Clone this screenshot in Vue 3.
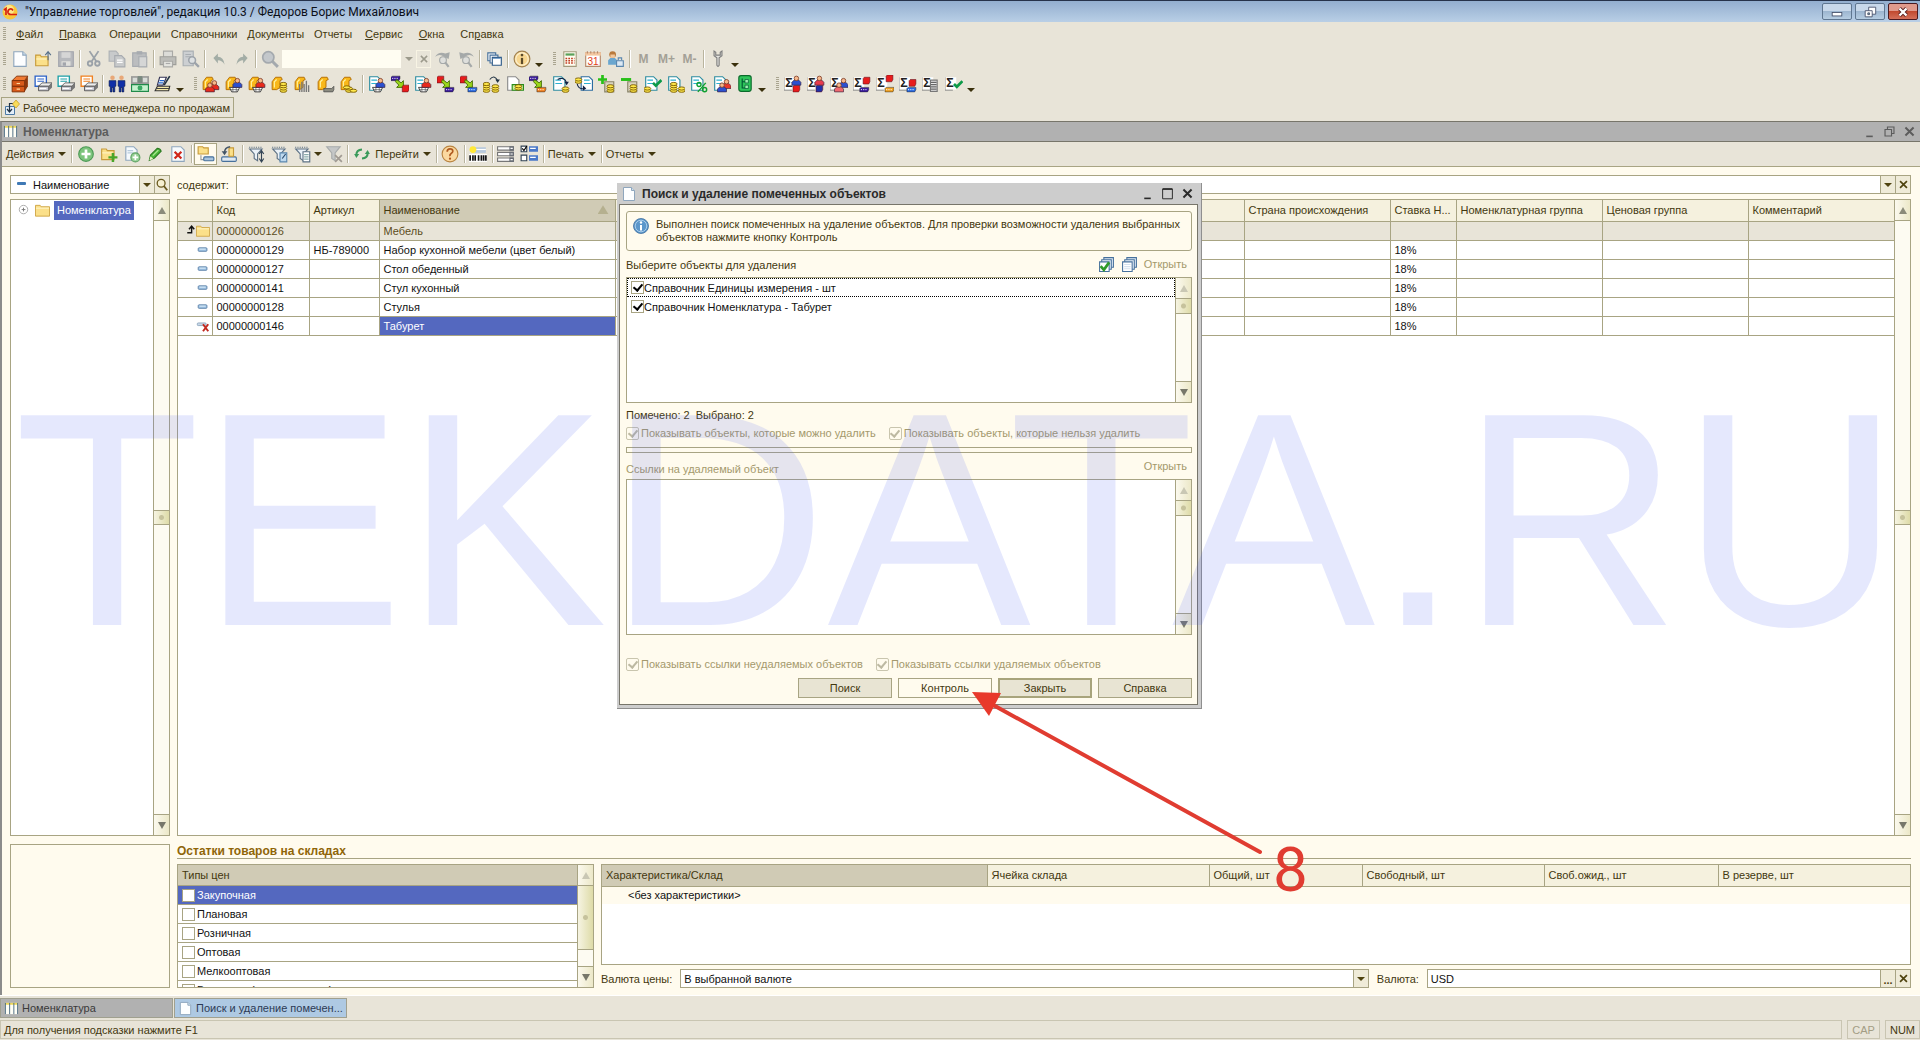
<script setup>
import { h, ref } from 'vue'

const doc = (c = '#2c8ca0', x = 1, y = 1, w = 10, hh = 12) =>
  `<path d="M${x}.5 ${y}.5h${w - 3}l3 3v${hh - 3}h-${w}z" fill="#fff" stroke="${c}"/>`
const lines = (c = '#2cb0d0', x = 3, y = 4) =>
  `<path d="M${x} ${y}.5h5M${x} ${y + 3}.5h6" stroke="${c}"/>`
const man = (x, y, c) =>
  `<path d="M${x} ${y + 8}v-2.500l2-2h4l2 2v2.500z" fill="${c}" stroke="#3a2540" stroke-width=".6"/><circle cx="${x + 4}" cy="${y + 2}" r="2" fill="#f6b98c" stroke="#7a3520" stroke-width=".7"/>`
const coins = (x, y, n = 3) =>
  Array.from({ length: n }, (_, i) => `<ellipse cx="${x + 3}" cy="${y + 6 - i * 2}" rx="3" ry="1.400" fill="#ffe84a" stroke="#7a5c00" stroke-width=".8"/>`).join('')
const bag = '<path d="M1 13V6l3-4h5l1 2-2 1v6l-3 2z" fill="#f9b81a" stroke="#b06a00" stroke-width=".8"/><path d="M3 11V6l2-2" stroke="#fff2a0" fill="none"/>'
const cart = (x, y) =>
  `<path d="M${x} ${y}h9l-2 4h-5z" fill="#fff" stroke="#333" stroke-width=".8"/><path d="M${x + 3} ${y}v4m3-4v4M${x + 1} ${y + 2}h7" stroke="#555" stroke-width=".6"/>`
const cube = (x, y, c) =>
  `<path d="M${x} ${y + 1}l1-1h5v4l-1 2h-5z" fill="${c}" stroke="#60101a" stroke-width=".5"/>`
const bar = (x, y, c) => `<path d="M${x} ${y + 1}l1-1h7v2l-1 2h-7z" fill="${c}" stroke="#222" stroke-width=".4"/><path d="M${x + 1} ${y + 2}h5" stroke="#fff" stroke-dasharray="1 1" stroke-width=".8"/>`
const go = '<path d="M5 4l4 3 2-2v6H5l2-2-3-3z" fill="#9ad61a" stroke="#3f6a00" stroke-width=".8"/>'
const sheet = '<path d="M0 2h10v11H0z" fill="#fff"/><path d="M0 13.500V2M0 13.500h7" stroke="#888" stroke-width=".8"/><text x="1" y="11" font-size="11" font-weight="bold" font-family="Liberation Sans" fill="#222">Σ</text>'
const printer = (c) =>
  `<path d="M1 1h10v9H1z" fill="#fff" stroke="${c}" stroke-width="1.200"/><path d="M3 3.500h6M3 5.500h6" stroke="${c}"/><path d="M4 10l3-3h9l-3 3z" fill="#eee" stroke="#444" stroke-width=".7"/><path d="M4 10h9v4H4z" fill="#c9c9d2" stroke="#444" stroke-width=".7"/><path d="M13 10l3-3v4l-3 3z" fill="#777"/><path d="M5 12h6" stroke="#fff"/>`
const check = (x, y) => `<path d="M${x} ${y + 3}l2.500 2.500 5-5" fill="none" stroke="#0c9a48" stroke-width="2.400"/>`
const curve = '<path d="M5 4q6-3 8 3" fill="none" stroke="#124"/><path d="M11 6h4l-2 3z" fill="#124"/>'
const funnel = '<path d="M1.500 3.500h11L8.500 8v6l-3-2V8z" fill="#eaf1f7" stroke="#5d7184"/><path d="M1 2h12" stroke="#5d7184" stroke-dasharray="1 1"/>'
const folder = (x, y) => `<path d="M${x}.5 ${y}.5h4l1 1.500h6v8h-11z" fill="#fbe08a" stroke="#c79a3a"/><path d="M${x + 1} ${y + 4}h9" stroke="#fff4c4"/>`
const pages = '<path d="M5.500 1.500h9v9h-9z" fill="#dfeaf5" stroke="#46709c"/><path d="M3.500 3.500h9v9h-9z" fill="#eef4fa" stroke="#46709c"/><path d="M1.500 5.500h9v9h-9z" fill="#fff" stroke="#46709c"/>'

const icons = {
  logo: '<circle cx="8" cy="8" r="7.500" fill="#f8c63a"/><circle cx="7" cy="6" r="5" fill="#fde78a"/><path d="M2 6l2-1.500V11M11 6.500q-1-2-3-1.500-2.500 1-2 3.500.5 2 3 2h6" fill="none" stroke="#d6220f" stroke-width="1.700"/>',
  blank: '<path d="M2.500 1.500h8l3 3v10h-11z" fill="#fdfeff" stroke="#8fa6bd"/><path d="M10.500 1.500v3h3" fill="#cfe0ee" stroke="#8fa6bd"/>',
  open: folder(1, 4) + '<path d="M12.500 9V2M10 4.500L12.500 1.500 15 4.500" fill="none" stroke="#56708a"/>',
  save: '<path d="M1.500 1.500h13v13h-13z" fill="#b7b9bd" stroke="#a2a5ac"/><path d="M4 2h8v5H4z" fill="#d6d6d6"/><path d="M4 10h8v4H4z" fill="#e0e0dd"/><path d="M5 11h3v3H5z" fill="#a2a5ac"/>',
  cut: '<path d="M4 1l6 9M12 1L6 10" stroke="#9aa1a8" stroke-width="1.600"/><circle cx="4.500" cy="12" r="2" fill="none" stroke="#9aa1a8" stroke-width="1.600"/><circle cx="11" cy="12" r="2" fill="none" stroke="#9aa1a8" stroke-width="1.600"/>',
  copy: '<path d="M1 1h6l2 2v7H1z" fill="#c8cacb" stroke="#adb1b5"/><path d="M6 5h6l3 3v7H6z" fill="#c8cacb" stroke="#a7abb0"/><path d="M8 9h5m-5 2h5" stroke="#fff"/>',
  paste: '<path d="M1.500 2.500h12v12h-12z" fill="#bbbdbf" stroke="#a7abb0"/><path d="M5 1h5v3H5z" fill="#a7abb0"/><path d="M7 6h7v9H7z" fill="#d5d6d6" stroke="#a7abb0"/>',
  print: '<path d="M4 1h8v6H4z" fill="#dcdcd8" stroke="#a9a9a6"/><path d="M1 6h14v7H1z" fill="#bcbcb8" stroke="#9e9e9a"/><path d="M4 10h8v5H4z" fill="#e4e4df" stroke="#a9a9a6"/><path d="M6 12h4" stroke="#aaa"/>',
  preview: '<path d="M1 1h9v13H1z" fill="#cccfd2" stroke="#a9aeb3"/><path d="M3 4h5M3 6h5" stroke="#a9aeb3"/><circle cx="9" cy="9" r="3" fill="#dde0e2" stroke="#9da3aa" stroke-width="1.400"/><path d="M11 11l4 4" stroke="#9da3aa" stroke-width="2"/>',
  undo: '<path d="M3 7l4-4v3q5 0 6 7-2-4-6-4v3z" fill="#a3ada6"/>',
  redo: '<path d="M13 7L9 3v3q-5 0-6 7 2-4 6-4v3z" fill="#a3ada6"/>',
  lens: '<circle cx="6.500" cy="6.500" r="5" fill="#c3c7cb" stroke="#a4a9ae" stroke-width="1.500"/><path d="M10 10l5 5" stroke="#a4a9ae" stroke-width="2.600"/>',
  next: '<path d="M1 6q3-5 9-3l4-1-1 6-4-2q-4-3-8 0z" fill="#a5a9a9"/><circle cx="8" cy="9" r="3" fill="#dedfdc" stroke="#a5a9a9"/><path d="M10 11l3 4" stroke="#a5a9a9" stroke-width="2"/>',
  prev: '<path d="M15 6q-3-5-9-3L2 2l1 6 4-2q4-3 8 0z" fill="#a5a9a9"/><circle cx="8" cy="9" r="3" fill="#dedfdc" stroke="#a5a9a9"/><path d="M10 11l3 4" stroke="#a5a9a9" stroke-width="2"/>',
  wins: '<path d="M2.500 2.500h7v7h-7z" fill="#fff" stroke="#46709c"/><path d="M4.500 4.500h7v7h-7z" fill="#fff" stroke="#46709c"/><path d="M6.500 6.500h8v7h-8z" fill="#fff" stroke="#2e5a88"/><path d="M7 7.500h7" stroke="#7ea4cc"/>',
  info: '<circle cx="8" cy="8" r="7" fill="#f7d690" stroke="#a08050"/><circle cx="8" cy="8" r="5.500" fill="none" stroke="#fdf0cf"/><circle cx="8" cy="4.500" r="1.200" fill="#5b4a2a"/><path d="M8 7v5.500" stroke="#5b4a2a" stroke-width="2"/>',
  calc: '<path d="M2.500 1.500h11v13h-11z" fill="#fffdf0" stroke="#a39a7c"/><path d="M4 3h8v2H4z" fill="#5aa05a"/><path d="M4 7.500h8M4 9.500h8M4 11.500h8" stroke="#c03a20" stroke-width="1.300" stroke-dasharray="1.500 1"/>',
  cal: '<path d="M1.500 2.500h13v12h-13z" fill="#fff" stroke="#b5896a"/><path d="M1 2h14v3H1z" fill="#f3c7a0"/><path d="M3 1v2m3-2v2m3-2v2m3-2v2" stroke="#b5896a"/><text x="3" y="13" font-size="9" font-family="Liberation Sans" fill="#e2401c">31</text>',
  user: '<circle cx="5" cy="4" r="3" fill="#b97a3c"/><path d="M3 4h4v3H3z" fill="#f2c79c"/><path d="M1 13V9l2-2h4l2 2v4z" fill="#6aa6cf"/><path d="M8.500 9.500h6v5h-6z" fill="#dce9f4" stroke="#5b87ae"/><path d="M10 9V7h3v2" fill="none" stroke="#5b87ae"/>',
  tools: '<path d="M4.500 1v4L7 7v6.500q1 2 2 0V7l2.500-2V1L10 2v2.500H6V2z" fill="#e4e4e0" stroke="#7d7d7d"/>',
  cabinet: '<path d="M1 5l4-4h10l-3 4z" fill="#f07a32" stroke="#7a2c06" stroke-width=".8"/><path d="M1 5h11v10H1z" fill="#d85a1a" stroke="#7a2c06" stroke-width=".8"/><path d="M12 5l3-4v9l-3 5z" fill="#8e360a"/><path d="M1 10h11" stroke="#7a2c06"/><path d="M5 7.500h3M5 12.500h3" stroke="#ffd9a0"/>',
  prBlue: printer('#2c62c8'),
  prTeal: printer('#1ca0a8'),
  prOrange: printer('#f08020'),
  people: '<circle cx="4" cy="2.500" r="2" fill="#e8a878"/><circle cx="12" cy="2.500" r="2" fill="#e8a878"/><path d="M1 5h6v5H6v5H4.500v-4h-1v4H2v-5H1zM9 5h6v5h-1v5h-1.500v-4h-1v4H10v-5H9z" fill="#0f2fa8" stroke="#061850" stroke-width=".6"/>',
  money: '<path d="M0 1h16v7H0z" fill="#9a9a98"/><path d="M1.500 2.500h4v4h-4zM10.500 2.500h4v4h-4z" fill="#d8dcd8"/><path d="M6 1h4v6H6z" fill="#7a8a80"/><path d="M.5 8.500h15v6H.5z" fill="#c6f2cf" stroke="#1f8a4a"/><circle cx="8" cy="11.500" r="2.200" fill="#3aa862"/>',
  scale: '<path d="M1 14l2-4h11l-1 4z" fill="#fff3b0" stroke="#333"/><path d="M5 2h6L8 9H3z" fill="#fff" stroke="#335"/><path d="M5 5h4M4 7h4" stroke="#26c" /><path d="M14 1L9 9" stroke="#234" stroke-width="1.500"/><path d="M2 12h12" stroke="#444"/>',
  bagRed: bag + man(7, 5, '#e82a1c') + man(3, 7, '#e82a1c'),
  bagCartBlue: bag + cart(4, 11) + man(7, 3, '#2c50d0'),
  bagCartRed: bag + cart(4, 11) + man(7, 3, '#e82a1c'),
  bagCoins: bag + coins(8, 8, 4),
  bagBars: bag + '<path d="M5 15V8m2 7V6m2 9V8m2 7V5m2 10V9" stroke="#777" stroke-width="1.200"/>',
  bagDash: bag + '<path d="M6 12h7l2-2v3l-1 2H6z" fill="#8b8b80" stroke="#444" stroke-width=".6"/>',
  bagPile: bag + coins(5, 8, 2) + coins(9, 8, 1) + coins(3, 5, 1),
  docCartBlue: doc() + lines() + cart(4, 11) + man(7, 3, '#2c50d0'),
  docCartRed: doc() + lines() + cart(4, 11) + man(7, 3, '#e82a1c'),
  moveOut: bar(0, 1, '#3a1a9c') + go + cube(10, 9, '#e81c1c'),
  moveIn: cube(0, 1, '#e81c1c') + go + bar(7, 11, '#3a1a9c'),
  moveIn2: cube(0, 1, '#e81c1c') + go + bar(7, 11, '#2a6ae0'),
  moveBars: bar(0, 1, '#3a1a9c') + go + bar(7, 11, '#f08020'),
  coinsTurn: coins(0, 8, 4) + coins(8, 8, 3) + '<path d="M6 4q4-5 7 1" fill="none" stroke="#234"/><path d="M11 4h4l-2 3z" fill="#234"/>',
  docMoney: doc('#8a8a8a') + '<path d="M5.500 8.500h10v5h-10z" fill="#c8f29a" stroke="#2a8a1a"/>' + coins(8, 6, 2),
  docTurn: doc() + lines() + curve + coins(9, 8, 2),
  turnDoc: doc('#2c6ca0', 5, 1) + lines('#2cb0d0', 8, 4) + coins(0, 0, 2) + '<path d="M2 8q1 5 6 4" fill="none" stroke="#124"/><path d="M7 9v5l3-2z" fill="#124"/>',
  plusCoins: '<path d="M6 6h8v9H6z" fill="#d9d4c0" stroke="#8a8468"/>' + coins(8, 8, 3) + '<path d="M4 0v8M0 4h8" stroke="#28c018" stroke-width="2.400"/>',
  minusCoins: '<path d="M6 6h8v9H6z" fill="#d9d4c0" stroke="#8a8468"/>' + coins(8, 8, 3) + '<path d="M0 4h9" stroke="#28c018" stroke-width="2.600"/>',
  docCheck: doc() + lines() + coins(0, 8, 2) + check(8, 4),
  docCoins: doc() + lines() + coins(3, 8, 4) + coins(10, 8, 2),
  docPct: doc() + lines() + '<circle cx="8" cy="8.500" r="1.800" fill="none" stroke="#10a030" stroke-width="1.300"/><circle cx="13" cy="13" r="1.800" fill="none" stroke="#10a030" stroke-width="1.300"/><path d="M14 7l-7 8" stroke="#10a030" stroke-width="1.300"/>',
  docMen: doc() + lines() + man(8, 4, '#e83a2c') + man(4, 7, '#2c50d0'),
  tree: '<rect x="2.500" y=".5" width="11" height="14" rx="2" fill="#2ec45a" stroke="#0a6a2a"/><path d="M5.500 3v8.500h3M5.500 6h3" stroke="#053" fill="none"/><path d="M8 4h3v3H8zM8 9h3v3H8z" fill="#9ff0b0" stroke="#053" stroke-width=".6"/>',
  sBlue: sheet + cube(8, 9, '#e81c1c') + man(7, 1, '#2c50d0'),
  sRed: sheet + cube(8, 9, '#2030a8') + man(7, 1, '#e83a4c'),
  sPink: sheet + man(8, 3, '#2c50d0') + man(4, 7, '#f06a70'),
  sCubePurple: sheet + cube(9, 2, '#e81c1c') + bar(6, 11, '#3a1a9c'),
  sCubeOrange: sheet + cube(9, 0, '#e81c1c') + bar(8, 11, '#f0a020'),
  sCubeBlue: sheet + cube(9, 4, '#e81c1c') + bar(7, 11, '#2a6ae0'),
  sList: sheet + '<path d="M7.500 4.500h6v10h-6z" fill="#e8e8e8" stroke="#777"/><path d="M8 6.500h5M8 8.500h5M8 10.500h5M8 12.500h5" stroke="#666"/>',
  sCheck: sheet + check(8, 5),
  work: '<path d="M1.500 6.500h9v8h-9z" fill="#e4eef8" stroke="#4d7aa5"/><path d="M5.500 3v8M3 9l2.500 3L8 9M5.500 3.500H9" fill="none" stroke="#234" stroke-width="1.200"/><path d="M12 0l3.500 4L12 8 8.500 4z" fill="#f9dc5a" stroke="#c49a20" stroke-width=".7"/>',
  grid: '<path d="M1 2h14v12H1z" fill="#fffef6"/><path d="M1 3h14" stroke="#eed75a" stroke-width="2"/><path d="M1.500 2v12M6 2v12M10.500 2v12M14.500 2v12" stroke="#4a6a80"/>',
  add: '<circle cx="8" cy="8" r="6.500" fill="#7cc47c" stroke="#4c9a55"/><path d="M8 4v8M4 8h8" stroke="#fff" stroke-width="2.400"/>',
  addFolder: folder(1, 3) + '<path d="M11.500 7v8M7.500 11h8" stroke="#49a52a" stroke-width="2.200"/>',
  addCopy: '<path d="M2.500 1.500h7l3 3v9h-10z" fill="#f4f9fd" stroke="#8fa6bd"/><path d="M4 5h5M4 7h5" stroke="#b7cbdc"/><circle cx="11" cy="11" r="4" fill="#93cf93" stroke="#5ba060"/><path d="M11 8.500v5M8.500 11h5" stroke="#fff" stroke-width="1.500"/>',
  edit: '<path d="M3 13.500l1-4.500 6-6q2.500 0 3.500 2.500l-6 6z" fill="#4cb83a" stroke="#2c7a22"/><path d="M3 13.500l1-3.500 2.500 2.500z" fill="#e8f4c8"/><path d="M6 9.500l5-5" stroke="#b4ec9a"/>',
  del: '<path d="M2.500 1.500h8l3 3v10h-11z" fill="#f6fafd" stroke="#8fa6bd"/><path d="M5 6l6 6M11 6l-6 6" stroke="#d0261a" stroke-width="2"/>',
  hier: '<path d="M1 1.500h4l1 1h4v5.500H1z" fill="#fbe08a" stroke="#c79a3a"/><path d="M3.500 9v4H6" fill="none" stroke="#999"/><rect x="6" y="10.500" width="9" height="3.500" rx="1" fill="#a9c4dc" stroke="#46709c"/>',
  up: '<rect x="1.500" y="10.500" width="13" height="4" rx="1" fill="#dfe9f2" stroke="#46709c"/><path d="M8 2.500h4V10H8z" fill="#fbe08a" stroke="#c79a3a"/><path d="M4 7q0-5 5-5.500" fill="none" stroke="#456" stroke-width="1.400"/><path d="M1.500 5.500h5L4 9z" fill="#456"/>',
  fSort: funnel + '<path d="M12 5v10M10 12l2 3 2-3M10 8l2-3 2 3" fill="none" stroke="#345"/>',
  fVal: funnel + '<path d="M8 7h6v8H8z" fill="#bfd9ee" stroke="#5a87ae"/><path d="M10 12l3-4" stroke="#246"/>',
  fHist: funnel + '<path d="M8 6h6v9H8z" fill="#fff" stroke="#5d7184"/><path d="M9 8.500h4M9 10.500h4M9 12.500h4" stroke="#8aa"/>',
  fOff: '<path d="M1.500 1.500h12L9 7v7l-3-2V7z" fill="#c5c7c7" stroke="#a7abab"/><path d="M9 9l6 6M15 9l-6 6" stroke="#a09a92" stroke-width="1.500"/>',
  refresh: '<path d="M3 8.500q0-4 5-4.500M13 7.500q0 4-5 4.500" fill="none" stroke="#3a9a5a" stroke-width="1.800"/><path d="M1 8h4.500L3 11.500zM10.500 8H15l-2-3.500z" fill="#3a9a5a"/>',
  help: '<circle cx="8" cy="8" r="7" fill="#fbd9a0" stroke="#b98440"/><path d="M5.500 6q0-2.500 2.500-2.500t2.500 2q0 1-1.500 2T8 10" fill="none" stroke="#b05a20" stroke-width="1.500"/><circle cx="8" cy="12.200" r="1" fill="#b05a20"/>',
  barcode: '<path d="M5 2h10v5H5z" fill="#b7c9dc"/><path d="M5 4h10" stroke="#fff"/><circle cx="3.500" cy="4" r="3" fill="#ffe836"/><path d="M0 8h16v7H0z" fill="#fff"/><path d="M1 9v5M3.500 9v5M5.500 9v5M8.500 9v5M11 9v5M13 9v5M15 9v5" stroke="#111" stroke-width="1.500"/>',
  rows: '<path d="M.5 1.500h14v3H.5zM.5 6.500h14v3H.5zM.5 11.500h14v3H.5z" fill="#fff" stroke="#777"/><path d="M11 1h4v4h-4zM11 6h4v4h-4zM11 11h4v4h-4z" fill="#6a6f76"/><path d="M12 3h2M12 8h2M12 13h2" stroke="#fff"/>',
  flags: '<path d="M1 1h5v5H1z" fill="#fff" stroke="#345"/><path d="M2 3l1.500 2L6 1" fill="none" stroke="#000"/><path d="M8 1h8v5H8zM8 9h8v5H8z" fill="#4a78c8"/><path d="M9 3h5M9 11h5" stroke="#fff"/><path d="M1 9h5v5H1z" fill="#fff" stroke="#345"/>',
  item: '<rect x="2.500" y="5.500" width="10" height="4" rx="1" fill="#9fc4e4" stroke="#5a7fa6"/><path d="M4 7h7" stroke="#e6f2fb"/>',
  dash: '<rect x="3" y="6" width="9" height="3" rx="1" fill="#3f79b5"/>',
  itemDel: '<rect x="1.500" y="4.500" width="10" height="3" rx="1" fill="#c9d9e8" stroke="#8aa3bc"/><path d="M8 6l6 8M14 6l-6 8" stroke="#c22a20" stroke-width="2.200"/>',
  folder: '<path d="M.5 2.500h5l1 1.500h9v10H.5z" fill="#fbe08a" stroke="#cfa545"/><path d="M1 5.500h14" stroke="#fff6cf"/>',
  level: '<path d="M6 10h5V3M8 6l3-3.500L14 6" fill="none" stroke="#111" stroke-width="1.600"/>',
  plus: '<circle cx="8" cy="7" r="4.500" fill="#fff" stroke="#a9a9a9"/><path d="M6 7h4M8 5v4" stroke="#777"/>',
  find: '<circle cx="7" cy="6" r="4.500" fill="#f6f0d0" stroke="#6a5a1e" stroke-width="1.500"/><path d="M10 9l4 5" stroke="#6a5a1e" stroke-width="2"/>',
  infoBlue: '<circle cx="8" cy="8" r="7.500" fill="#5c97cb" stroke="#3f6f9e" stroke-width=".8"/><circle cx="8" cy="8" r="5.800" fill="none" stroke="#a9cdea"/><circle cx="8" cy="4.500" r="1.200" fill="#fff"/><path d="M8 7v5.500" stroke="#fff" stroke-width="2"/>',
  allOn: pages + '<path d="M2.500 9.500l3 3.500 5-7" fill="none" stroke="#2f9a2a" stroke-width="2.600"/>',
  allOff: pages + '<path d="M3 8h6M3 10h6M3 12h6" stroke="#d5e2ee"/>',
  min: '<path d="M4 14h8" stroke="currentColor" stroke-width="2"/>',
  max: '<path d="M2 2.500h12v12H2z" fill="none" stroke="currentColor" stroke-width="1.200"/><path d="M2 2.500h12" stroke="currentColor" stroke-width="2"/>',
  restore: '<path d="M5.500 5V2.500h8v8H11" fill="none" stroke="currentColor" stroke-width="1.400"/><path d="M2.500 5.500h8v8h-8z" fill="none" stroke="currentColor" stroke-width="1.400"/>',
  close: '<path d="M3 3l10 10M13 3L3 13" stroke="currentColor" stroke-width="2.400"/>',
  capMin: '<rect x="2.500" y="8.500" width="11" height="4" fill="#fff" stroke="#46506a"/>',
  capRestore: '<path d="M6.500 2.500h8v8h-8z" fill="#fff" stroke="#46506a"/><path d="M2.500 6.500h8v7h-8z" fill="#fff" stroke="#46506a"/><path d="M5.500 9h2v2h-2z" fill="#8aa" stroke="#46506a"/>',
  capClose: '<path d="M4 4l8 8M12 4l-8 8" stroke="#5a2020" stroke-width="4.600"/><path d="M4 4l8 8M12 4l-8 8" stroke="#fff" stroke-width="2.800"/>',
}

const Ico = (p) => h('svg', { class: 'ico', viewBox: '0 0 16 16', 'aria-hidden': 'true', innerHTML: icons[p.n] })
Ico.props = ['n']

const VScroll = (p) =>
  h('div', { class: ['vs', p.idle && 'idle'] }, [
    h('button', { class: 'vs-up', type: 'button', 'aria-label': 'Вверх' }),
    p.mid ? h('i', { class: 'vs-gap' }) : null,
    h('i', { class: ['vs-thumb', p.long && 'long'] }),
    h('i', { class: 'vs-gap' }),
    h('button', { class: 'vs-down', type: 'button', 'aria-label': 'Вниз' }),
  ])
VScroll.props = { mid: Boolean, idle: Boolean, long: Boolean }

const menu = [
  ['', 'Ф', 'айл'], ['', 'П', 'равка'], ['Операции'], ['Справочники'], ['Документы'], ['Отчеты'],
  ['', 'С', 'ервис'], ['', 'О', 'кна'], ['Сп', 'р', 'авка'],
]
const standard = ['blank', 'open', 'save', '|', 'cut', 'copy', 'paste', '|', 'print', 'preview', '|', 'undo', 'redo', '|', 'lens']
const standard2 = ['next', 'prev', '|', 'wins', '|', 'info', 'v', ':', 'calc', 'cal', 'user', '|', 'M', 'M+', 'M-', '|', 'tools', 'v']
const trade = [
  'cabinet', 'prBlue', 'prTeal', 'prOrange', '|', 'people', 'money', 'scale', 'v', ':',
  'bagRed', 'bagCartBlue', 'bagCartRed', 'bagCoins', 'bagBars', 'bagDash', 'bagPile', '|',
  'docCartBlue', 'moveOut', 'docCartRed', 'moveIn', 'moveIn2', 'coinsTurn', 'docMoney', 'moveBars', 'docTurn', 'turnDoc',
  'plusCoins', 'minusCoins', 'docCheck', 'docCoins', 'docPct', 'docMen', 'tree', 'v', ':',
  'sBlue', 'sRed', 'sPink', 'sCubePurple', 'sCubeOrange', 'sCubeBlue', 'sList', 'sCheck', 'v',
]
const listTools = [
  '=Действия', '|', 'add', 'addFolder', 'addCopy', 'edit', 'del', '|', '*hier', 'up', '|', 'fSort', 'fVal', 'fHist', '^', 'fOff', '|',
  'refresh', '=Перейти', '|', 'help', '|', 'barcode', '|', 'rows', 'flags', '|', '=Печать', '|', '=Отчеты',
]
const goods = [
  { icon: 'item', code: '00000000129', art: 'НБ-789000', name: 'Набор кухонной мебели (цвет белый)', vat: '18%' },
  { icon: 'item', code: '00000000127', art: '', name: 'Стол обеденный', vat: '18%' },
  { icon: 'item', code: '00000000141', art: '', name: 'Стул кухонный', vat: '18%' },
  { icon: 'item', code: '00000000128', art: '', name: 'Стулья', vat: '18%' },
  { icon: 'itemDel', code: '00000000146', art: '', name: 'Табурет', vat: '18%', on: true },
]
const prices = ['Закупочная', 'Плановая', 'Розничная', 'Оптовая', 'Мелкооптовая', 'Валютная (оптовая, спец.)']
const found = ref([
  { text: 'Справочник Единицы измерения - шт', on: true },
  { text: 'Справочник Номенклатура - Табурет', on: true },
])
</script>

<template>
  <div class="app">
    <header class="caption">
      <Ico n="logo" />
      <h1>"Управление торговлей", редакция 10.3 / Федоров Борис Михайлович</h1>
      <button class="cap" type="button" aria-label="Свернуть"><Ico n="capMin" /></button>
      <button class="cap" type="button" aria-label="Развернуть"><Ico n="capRestore" /></button>
      <button class="cap cap-x" type="button" aria-label="Закрыть"><Ico n="capClose" /></button>
    </header>

    <nav class="menu">
      <i class="grip"></i>
      <a v-for="(m, i) in menu" :key="i" href="#" :class="{ key: m[1] }">{{ m[0] }}<u v-if="m[1]">{{ m[1] }}</u>{{ m[2] }}</a>
    </nav>

    <div class="bar">
      <i class="grip"></i>
      <template v-for="(t, i) in standard" :key="i">
        <i v-if="t === '|'" class="sep"></i>
        <button v-else class="tb" type="button" :aria-label="t"><Ico :n="t" /></button>
      </template>
      <input class="quick" type="text" aria-label="Поиск">
      <button class="quick-b" type="button" aria-label="Список"><i class="tri"></i></button>
      <button class="quick-b boxed" type="button" aria-label="Очистить"><Ico n="close" /></button>
      <template v-for="(t, i) in standard2" :key="'b' + i">
        <i v-if="t === '|'" class="sep"></i>
        <i v-else-if="t === ':'" class="grip"></i>
        <button v-else-if="t === 'v'" class="more" type="button" aria-label="Ещё"><i class="tri"></i></button>
        <button v-else-if="t[0] === 'M'" class="tb mem" type="button">{{ t }}</button>
        <button v-else class="tb" type="button" :aria-label="t"><Ico :n="t" /></button>
      </template>
    </div>

    <div class="bar bar2">
      <i class="grip"></i>
      <template v-for="(t, i) in trade" :key="i">
        <i v-if="t === '|'" class="sep"></i>
        <i v-else-if="t === ':'" class="grip"></i>
        <button v-else-if="t === 'v'" class="more" type="button" aria-label="Ещё"><i class="tri"></i></button>
        <button v-else class="tb" type="button" :aria-label="t"><Ico :n="t" /></button>
      </template>
    </div>

    <div class="desk-row">
      <button class="work" type="button"><Ico n="work" />Рабочее место менеджера по продажам</button>
    </div>

    <main class="win">
      <div class="win-title">
        <Ico n="grid" />
        <h2>Номенклатура</h2>
        <button type="button" aria-label="Свернуть"><Ico n="min" /></button>
        <button type="button" aria-label="Восстановить"><Ico n="restore" /></button>
        <button type="button" aria-label="Закрыть"><Ico n="close" /></button>
      </div>

      <div class="bar list-bar">
        <template v-for="(t, i) in listTools" :key="i">
          <i v-if="t === '|'" class="sep"></i>
          <button v-else-if="t[0] === '='" class="word" type="button">{{ t.slice(1) }}<i class="tri"></i></button>
          <i v-else-if="t === '^'" class="tri"></i>
          <button v-else-if="t[0] === '*'" class="tb down" type="button" aria-label="Иерархия"><Ico :n="t.slice(1)" /></button>
          <button v-else class="tb" type="button" :aria-label="t"><Ico :n="t" /></button>
        </template>
      </div>

      <div class="body">
        <aside class="left">
          <div class="field by">
            <Ico n="dash" />
            <select aria-label="Поле поиска"><option>Наименование</option></select>
            <button type="button" aria-label="Выбрать"><i class="tri"></i></button>
            <button type="button" aria-label="Найти"><Ico n="find" /></button>
          </div>
          <div class="tree box">
            <div class="tree-in"><Ico n="plus" /><Ico n="folder" /><span>Номенклатура</span></div>
            <VScroll mid />
          </div>
          <div class="pic box"></div>
        </aside>

        <section class="right">
          <div class="find-row">
            <label for="has">содержит:</label>
            <div class="field">
              <input id="has" type="text">
              <button type="button" aria-label="Выбрать"><i class="tri"></i></button>
              <button type="button" aria-label="Очистить"><Ico n="close" /></button>
            </div>
          </div>

          <div class="goods box">
            <div class="tw">
              <table>
                <colgroup>
                  <col class="c-ic"><col class="c-code"><col class="c-art"><col class="c-name"><col>
                  <col class="c-w"><col class="c-vat"><col class="c-w"><col class="c-w"><col class="c-w">
                </colgroup>
                <thead>
                  <tr>
                    <th></th><th>Код</th><th>Артикул</th><th class="cur">Наименование<i class="sort"></i></th><th></th>
                    <th>Страна происхождения</th><th>Ставка Н...</th><th>Номенклатурная группа</th><th>Ценовая группа</th><th>Комментарий</th>
                  </tr>
                </thead>
                <tbody>
                  <tr class="group">
                    <td class="ic"><div><Ico n="level" /><Ico n="folder" /></div></td><td>00000000126</td><td></td><td>Мебель</td>
                    <td></td><td></td><td></td><td></td><td></td><td></td>
                  </tr>
                  <tr v-for="g in goods" :key="g.code">
                    <td class="ic"><div><Ico :n="g.icon" /></div></td><td>{{ g.code }}</td><td>{{ g.art }}</td>
                    <td :class="{ sel: g.on }">{{ g.name }}</td><td></td><td></td><td>{{ g.vat }}</td><td></td><td></td><td></td>
                  </tr>
                </tbody>
              </table>
            </div>
            <VScroll mid />
          </div>

          <h3>Остатки товаров на складах</h3>

          <div class="bottom">
            <div class="prices box">
              <div class="pl">
                <div class="pl-head">Типы цен</div>
                <label v-for="(p, i) in prices" :key="p" :class="{ sel: i === 0 }"><input type="checkbox">{{ p }}</label>
              </div>
              <VScroll long idle />
            </div>
            <div class="stock">
              <div class="box st-box">
                <table>
                  <colgroup><col class="s1"><col class="s2"><col class="s3"><col class="s4"><col class="s5"><col></colgroup>
                  <thead>
                    <tr><th class="cur">Характеристика/Склад</th><th>Ячейка склада</th><th>Общий, шт</th><th>Свободный, шт</th><th>Своб.ожид., шт</th><th>В резерве, шт</th></tr>
                  </thead>
                  <tbody><tr><td>&lt;без характеристики&gt;</td><td></td><td></td><td></td><td></td><td></td></tr></tbody>
                </table>
              </div>
              <div class="money-row">
                <label for="pc">Валюта цены:</label>
                <div class="field pcur">
                  <select id="pc"><option>В выбранной валюте</option></select>
                  <button type="button" aria-label="Выбрать"><i class="tri"></i></button>
                </div>
                <label for="cu">Валюта:</label>
                <div class="field ccur">
                  <input id="cu" type="text" value="USD">
                  <button type="button" class="dots">...</button>
                  <button type="button" aria-label="Очистить"><Ico n="close" /></button>
                </div>
              </div>
            </div>
          </div>
        </section>
      </div>
    </main>

    <nav class="tasks">
      <button type="button"><Ico n="grid" />Номенклатура</button>
      <button type="button" class="on"><Ico n="blank" />Поиск и удаление помечен...</button>
    </nav>

    <footer class="status">
      <span class="hint">Для получения подсказки нажмите F1</span>
      <span class="off">CAP</span>
      <span>NUM</span>
    </footer>

    <section class="dlg" role="dialog" aria-labelledby="dt">
      <div class="dlg-title">
        <Ico n="blank" />
        <h2 id="dt">Поиск и удаление помеченных объектов</h2>
        <button type="button" aria-label="Свернуть"><Ico n="min" /></button>
        <button type="button" aria-label="Развернуть"><Ico n="max" /></button>
        <button type="button" aria-label="Закрыть"><Ico n="close" /></button>
      </div>
      <div class="dlg-body">
        <div class="note">
          <Ico n="infoBlue" />
          <p>Выполнен поиск помеченных на удаление объектов. Для проверки возможности удаления выбранных объектов нажмите кнопку Контроль</p>
        </div>
        <div class="cap-row">
          <span>Выберите объекты для удаления</span>
          <button type="button" aria-label="Отметить все"><Ico n="allOn" /></button>
          <button type="button" aria-label="Снять все"><Ico n="allOff" /></button>
          <button type="button" class="dim" disabled>Открыть</button>
        </div>
        <div class="box found">
          <div class="found-in">
            <label v-for="(f, i) in found" :key="i" :class="{ focus: i === 0 }"><input v-model="f.on" type="checkbox">{{ f.text }}</label>
          </div>
          <VScroll idle />
        </div>
        <p class="count">Помечено: 2&nbsp; Выбрано: 2</p>
        <div class="checks">
          <label><input type="checkbox" checked disabled>Показывать объекты, которые можно удалить</label>
          <label><input type="checkbox" checked disabled>Показывать объекты, которые нельзя удалить</label>
        </div>
        <div class="split"></div>
        <div class="cap-row links">
          <span>Ссылки на удаляемый объект</span>
          <button type="button" class="dim" disabled>Открыть</button>
        </div>
        <div class="box refs">
          <div class="found-in"></div>
          <VScroll idle />
        </div>
        <div class="checks low">
          <label><input type="checkbox" checked disabled>Показывать ссылки неудаляемых объектов</label>
          <label><input type="checkbox" checked disabled>Показывать ссылки удаляемых объектов</label>
        </div>
        <div class="btns">
          <button type="button">Поиск</button>
          <button type="button" class="hot">Контроль</button>
          <button type="button" class="def">Закрыть</button>
          <button type="button">Справка</button>
        </div>
      </div>
    </section>

    <svg class="over" viewBox="0 0 1920 1040">
      <text class="wm" x="14" y="625">TEKDATA.RU</text>
      <path d="M995 706L1260 852" stroke="#e03c31" stroke-width="4" stroke-linecap="round" />
      <path d="M972 692L1001 693 989 716z" fill="#e8392b" />
      <text class="step" x="1273" y="891">8</text>
    </svg>
  </div>
</template>

<style>
body { margin: 0; background: #e8e4d8; }
.ico { width: 18px; height: 18px; flex: none; display: block; }
.vs { width: 16px; flex: none; display: flex; flex-direction: column; border-left: 1px solid #a8a483; background: #fdfbf2; }
.vs button { height: 21px; flex: none; padding: 0; border: 0; display: flex; align-items: center; justify-content: center; background: linear-gradient(90deg, #fbf9ee, #ece8c8); }
.vs .vs-up { border-bottom: 1px solid #a8a483; }
.vs .vs-down { border-top: 1px solid #a8a483; }
.vs button::before { content: ""; border: 4px solid transparent; }
.vs .vs-up::before { border-bottom: 7px solid #8b8b7a; border-top: 0; }
.vs .vs-down::before { border-top: 7px solid #77776a; border-bottom: 0; }
.vs.idle .vs-up::before { border-bottom-color: #c9c7b4; }
.vs-gap { flex: 1; }
.vs-thumb { height: 15px; flex: none; border-bottom: 1px solid #a8a483; background: radial-gradient(circle, #c6c29c 2px, transparent 3px), linear-gradient(90deg, #f6f4e2, #dedba8); }
.vs-gap + .vs-thumb { border-top: 1px solid #a8a483; }
.vs-thumb.long { height: 64px; }
</style>

<style scoped>
.app { position: relative; min-height: 100vh; display: flex; flex-direction: column; overflow: hidden; background: #e8e4d8; color: #43380f; font: 11px/14px "Liberation Sans", Arial, sans-serif; }
.app * { box-sizing: border-box; }
button, input, select { font: inherit; color: inherit; margin: 0; }
button { cursor: default; }
h1, h2, h3 { margin: 0; font-size: 12px; }
p { margin: 0; }

.caption { height: 22px; flex: none; display: flex; align-items: center; padding: 0 2px 0 1px; background: linear-gradient(#93aecf, #b9cfe6); border-top: 1px solid #26324a; }
.caption h1 { flex: 1; margin-left: 7px; font: 12px/18px Roboto, "Open Sans", sans-serif; color: #0b0f18; }
.cap { width: 30px; height: 17px; margin-left: 3px; padding: 0; border: 1px solid #5f7690; border-radius: 2px; background: linear-gradient(#c8d8ea 45%, #9db6d0 50%, #b6cde2); display: flex; align-items: center; justify-content: center; }
.cap .ico { width: 14px; height: 14px; }
.caption > .ico { width: 16px; height: 16px; margin-left: 1px; }
.cap-x { border-color: #4a1a20; background: linear-gradient(#e09a8c 45%, #c14a30 50%, #d4705a); }

.menu { height: 24px; flex: none; display: flex; align-items: center; }
.menu a { padding: 0 5px; color: #43380f; text-decoration: none; }
.menu a.key { padding: 0 8px; }
.grip { width: 8px; height: 14px; flex: none; background: repeating-linear-gradient(#a9a48f 0 1px, transparent 1px 2px) 3px 0 / 3px 100% no-repeat; }
.more + .grip { width: 13px; background-position: 8px 0; }

.bar { height: 25px; flex: none; display: flex; align-items: center; }
.tb { width: 23px; height: 22px; flex: none; padding: 0; border: 1px solid transparent; background: none; display: flex; align-items: center; justify-content: center; }
.mem { font-weight: bold; font-size: 12px; color: #a3a096; }
.sep { width: 5px; height: 18px; flex: none; background: linear-gradient(90deg, transparent 2px, #b9b49e 2px 3px, #fff 3px 4px, transparent 4px); }
.tri { width: 0; height: 0; flex: none; border: 4px solid transparent; border-top-color: currentColor; border-bottom: 0; }
.more { width: 12px; height: 18px; padding: 0; border: 0; background: none; display: flex; align-items: flex-end; justify-content: center; padding-bottom: 1px; color: #3a300c; }
.quick { width: 119px; height: 18px; margin-left: 1px; border: 0; background: #fffdf2; padding: 0 4px; }
.quick-b { width: 15px; height: 18px; padding: 0; border: 0; background: none; display: flex; align-items: center; justify-content: center; color: #9c9a8c; }
.boxed { border: 1px solid #f8f4e4; }
.quick-b .ico { width: 10px; height: 10px; }
.desk-row { height: 23px; flex: none; padding: 1px; margin-bottom: 2px; }
.work { height: 21px; padding: 0 3px 0 2px; display: flex; align-items: center; gap: 3px; border: 1px solid #a8a483; background: #e8e4d8; }
.work .ico { width: 16px; height: 16px; }

.win { flex: 1; display: flex; flex-direction: column; border-left: 2px solid #8b8b8b; border-top: 1px solid #77756a; background: #fffbee; }
.win-title { height: 20px; flex: none; display: flex; align-items: center; padding: 0 1px; background: #b1b1b1; border-bottom: 1px solid #77756a; color: #5c5c5c; }
.win-title h2 { flex: 1; margin-left: 5px; }
.win-title button, .dlg-title button { width: 20px; height: 18px; padding: 0; border: 0; background: none; display: flex; align-items: center; justify-content: center; }
.win-title .ico, .dlg-title button .ico { width: 13px; height: 13px; }
.win-title > .ico { width: 15px; height: 15px; }
.list-bar { background: #e8e4d8; border-bottom: 1px solid #a8a483; padding-left: 2px; }
.word { padding: 0; border: 0; background: none; display: flex; align-items: center; gap: 4px; margin: 0 3px 0 2px; }
.down { border-color: #a8a483; background: #fffbee; }

.body { flex: 1; display: flex; gap: 7px; padding: 8px 9px 7px 8px; }
.box { border: 1px solid #a8a483; background: #fff; display: flex; }
.left { width: 160px; flex: none; display: flex; flex-direction: column; }
.right { flex: 1; min-width: 0; display: flex; flex-direction: column; }
.field { height: 19px; flex: 1; min-width: 0; display: flex; align-items: stretch; border: 1px solid #a8a483; background: #fff; color: #111; }
.field input, .field select { flex: 1; min-width: 0; width: 0; border: 0; padding: 0 3px; background: none; appearance: none; outline: 0; }
.field button { width: 15px; flex: none; padding: 0; border: 0; border-left: 1px solid #a8a483; background: #efebd8; color: #4f430f; display: flex; align-items: center; justify-content: center; }
.field button .ico { width: 11px; height: 11px; }
.by { flex: none; }
.by > .ico { width: 16px; height: 16px; margin-left: 3px; }
.by button .ico { width: 14px; height: 14px; }
.tree { flex: 1; margin-top: 5px; }
.tree-in { flex: 1; display: flex; align-items: center; align-self: flex-start; height: 20px; gap: 4px; padding-left: 5px; white-space: nowrap; }
.tree-in .ico { width: 15px; height: 15px; }
.tree-in span { height: 19px; line-height: 19px; padding: 0 3px; background: #5468bf; color: #fff; }
.pic { height: 144px; flex: none; margin-top: 8px; background: #fffbee; }

.find-row { display: flex; align-items: center; gap: 7px; }
.goods { flex: 1; margin-top: 5px; }
.tw { flex: 1; min-width: 0; }
table { width: 100%; border-collapse: collapse; table-layout: fixed; }
.c-ic { width: 34px; } .c-code { width: 97px; } .c-art { width: 70px; } .c-name { width: 236px; } .c-w { width: 146px; } .c-vat { width: 66px; }
th { height: 21px; padding: 0 4px; text-align: left; font-weight: normal; background: #f5f1de; border: 1px solid #a8a483; border-top: 0; white-space: nowrap; overflow: hidden; }
td { height: 19px; padding: 0 4px; border: 1px solid #a8a483; color: #111; white-space: nowrap; overflow: hidden; }
th:first-child, td:first-child { border-left: 0; }
.goods th:last-child, .goods td:last-child, .st-box th:last-child { border-right: 0; }
th.cur { background: #d0cbb5; }
.sort { float: right; width: 11px; height: 9px; margin: 2px 2px 0 0; background: #b5b08f; clip-path: polygon(50% 0, 100% 100%, 0 100%); }
.group td { background: #e8e4d8; color: #5c4d1c; }
td.sel, label.sel { background: #5468bf; color: #fff; }
td.ic { padding: 0 2px; }
.ic div { display: flex; align-items: center; justify-content: flex-end; }
.ic .ico { width: 14px; height: 14px; }

h3 { height: 18px; margin: 5px 0; line-height: 20px; border-bottom: 1px solid #a8a483; color: #8f6508; }
.bottom { height: 124px; display: flex; gap: 7px; }
.prices { width: 417px; flex: none; overflow: hidden; }
.pl { flex: 1; overflow: hidden; }
.pl-head { height: 21px; line-height: 20px; padding: 0 4px; background: #d0cbb5; border-bottom: 1px solid #a8a483; }
.pl label { height: 19px; display: flex; align-items: center; gap: 2px; padding-left: 4px; border-bottom: 1px solid #a8a483; color: #111; }
.pl label.sel { color: #fff; }
input[type="checkbox"] { appearance: none; width: 13px; height: 13px; flex: none; margin: 0; border: 1px solid #a8a483; background: #fff; display: grid; place-items: center; }
input[type="checkbox"]:checked::before { content: ""; width: 4px; height: 7px; border: solid #000; border-width: 0 2px 2px 0; transform: rotate(40deg); margin-bottom: 2px; }
input[type="checkbox"]:disabled { border-color: #c9c5ae; background: transparent; border-radius: 2px; }
input[type="checkbox"]:disabled::before { border-color: #bdb9a2; }
.stock { flex: 1; min-width: 0; display: flex; flex-direction: column; gap: 4px; }
.st-box { flex: 1; align-items: flex-start; }
.st-box td { height: 18px; border: 0; background: #fffbee; padding-left: 26px; }
.s1 { width: 385px; } .s2 { width: 222px; } .s3 { width: 153px; } .s4 { width: 182px; } .s5 { width: 174px; }
.money-row { display: flex; align-items: center; gap: 8px; }
.pcur { flex: 692; }
.ccur { flex: 486; }
.field .dots { align-items: flex-end; font-weight: bold; }

.tasks { height: 25px; flex: none; display: flex; gap: 1px; padding: 2px 0; border-top: 1px solid #fff; }
.tasks button { width: 173px; height: 20px; display: flex; align-items: center; gap: 3px; padding: 0 3px; border: 1px solid #a0a08f; background: #b1b1b1; color: #3a3a3a; white-space: nowrap; }
.tasks .on { background: #aec9e3; color: #2c3a55; }
.tasks .ico { width: 15px; height: 15px; }
.status { height: 20px; flex: none; display: flex; gap: 5px; padding-bottom: 1px; }
.status span { border: 1px solid #c9c5b2; padding: 2px 4px; }
.status .hint { flex: 1; padding-left: 3px; }
.status .off { color: #a39d85; }

.dlg { position: absolute; left: 617px; top: 183px; width: 585px; padding: 0 3px 3px 2px; background: #cdcdcd; border: solid #8f8f8f; border-width: 0 1px 1px 0; }
.dlg-title { height: 22px; display: flex; align-items: center; padding: 0 1px 0 2px; border-bottom: 1px solid #77756a; color: #2a2a2a; }
.dlg-title > .ico { width: 16px; height: 16px; }
.dlg-title h2 { flex: 1; margin-left: 5px; }
.dlg-body { padding: 6px 5px 6px 6px; background: #fffbee; border: solid #77756a; border-width: 0 1px 1px; }
.note { height: 40px; display: flex; gap: 7px; padding: 6px; border: 1px solid #a8a483; border-radius: 3px; line-height: 13px; }
.note .ico { width: 16px; height: 16px; }
.cap-row { height: 26px; display: flex; align-items: center; gap: 6px; padding-right: 5px; }
.cap-row span { flex: 1; padding-top: 2px; }
.cap-row button { padding: 0; border: 0; background: none; }
.cap-row .ico { width: 17px; height: 17px; }
.dim { color: #a4996c; }
.found { height: 126px; }
.found-in { flex: 1; }
.found label { height: 19px; display: flex; align-items: center; padding-left: 3px; border: 1px solid transparent; color: #111; }
.found label.focus { border: 1px dotted #000; }
.count { margin-top: 4px; line-height: 16px; }
.checks { display: flex; gap: 13px; margin-top: 3px; color: #a4996c; }
.checks label { display: flex; align-items: center; gap: 2px; height: 14px; white-space: nowrap; }
.split { height: 6px; margin-top: 7px; border: 1px solid #a8a483; }
.links { color: #a4996c; }
.links span { padding-top: 6px; }
.refs { height: 156px; }
.low { margin-top: 22px; }
.btns { display: flex; justify-content: flex-end; gap: 6px; margin-top: 7px; }
.btns button { width: 94px; height: 20px; padding: 0; border: 1px solid #a8a483; background: #e8e4d3; }
.btns .hot { background: #fffbee; }
.btns .def { border: 2px solid #a8a47c; }

.over { position: absolute; left: 0; top: 0; width: 100%; height: auto; pointer-events: none; }
.wm { font: 305px "Liberation Sans", Arial, sans-serif; fill: rgba(80, 100, 240, .15); }
.step { font: 62px Roboto, "Liberation Sans", sans-serif; fill: #e03c31; }
</style>
